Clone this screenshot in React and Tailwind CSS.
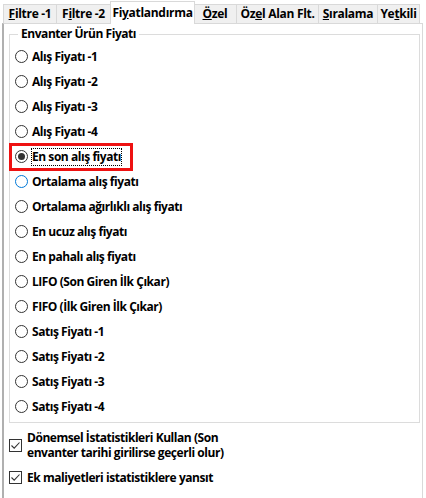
import React from "react";

const font = { fontFamily: '"Open Sans", "Noto Sans", sans-serif' };

function Tab({ children, selected, w }) {
  if (selected) {
    return (
      <div className={"h-[23px] -mb-px relative z-10 bg-white border border-[#d9d9d9] border-b-0 flex items-center justify-center shrink-0 whitespace-nowrap text-[12px] font-bold tracking-[-0.3px] text-black -mx-px " + w}>
        {children}
      </div>
    );
  }
  return (
    <div className={"h-[19px] bg-[#f0f0f0] border border-[#d9d9d9] border-b-0 -ml-px first:ml-0 flex items-center justify-center shrink-0 whitespace-nowrap text-[12px] font-bold tracking-[-0.3px] text-black " + w}>
      {children}
    </div>
  );
}

function Radio({ label, checked, hover, focus, highlight }) {
  const circle = (
    <span
      className={
        "w-[13px] h-[13px] rounded-full bg-white border flex items-center justify-center shrink-0 " +
        (hover ? "border-[#0078d7]" : "border-[#333333]")
      }
    >
      {checked && <span className="w-[7px] h-[7px] rounded-full bg-[#333333]" />}
    </span>
  );
  const text = (
    <span
      className={
        "text-[12px] font-bold tracking-[-0.45px] whitespace-nowrap text-black leading-[16px] " +
        (focus ? "outline outline-1 outline-dotted outline-black" : "")
      }
    >
      {label}
    </span>
  );
  if (highlight) {
    return (
      <div className="h-[25px] flex items-center">
        <div className="-ml-[6px] h-[28px] w-[124px] border-[3px] border-[#ee1111] flex items-center pl-[3px] gap-[4px]">
          {circle}
          {text}
        </div>
      </div>
    );
  }
  return (
    <div className="h-[25px] flex items-center gap-[4px]">
      {circle}
      {text}
    </div>
  );
}

function Check({ children }) {
  return (
    <div className="flex items-center gap-[5px]">
      <span className="w-[13px] h-[13px] border border-[#333333] bg-white shrink-0 flex items-center justify-center">
        <svg width="11" height="11" viewBox="0 0 11 11">
          <path d="M1.5 5.5 L4.2 8.2 L9.5 2.5" fill="none" stroke="#333333" strokeWidth="1.1" />
        </svg>
      </span>
      <span className="text-[12px] font-bold tracking-[-0.45px] text-black leading-[15px] whitespace-nowrap">{children}</span>
    </div>
  );
}

export default function App() {
  const items = [
    { label: "Alış Fiyatı -1" },
    { label: "Alış Fiyatı -2" },
    { label: "Alış Fiyatı -3" },
    { label: "Alış Fiyatı -4" },
    { label: "En son alış fiyatı", checked: true, focus: true, highlight: true },
    { label: "Ortalama alış fiyatı", hover: true },
    { label: "Ortalama ağırlıklı alış fiyatı" },
    { label: "En ucuz alış fiyatı" },
    { label: "En pahalı alış fiyatı" },
    { label: "LIFO (Son Giren İlk Çıkar)" },
    { label: "FIFO (İlk Giren İlk Çıkar)" },
    { label: "Satış Fiyatı -1" },
    { label: "Satış Fiyatı -2" },
    { label: "Satış Fiyatı -3" },
    { label: "Satış Fiyatı -4" },
  ];
  return (
    <div className="w-[426px] h-[498px] bg-white overflow-hidden flex flex-col" style={font}>
      <div className="flex items-end pl-[3px] h-[23px] shrink-0">
        <Tab w="w-[54px]"><span><u>F</u>iltre -1</span></Tab>
        <Tab w="w-[55px]"><span>F<u>i</u>ltre -2</span></Tab>
        <Tab selected w="w-[85px]"><span>Fi<u>y</u>atlandırma</span></Tab>
        <Tab w="w-[44px]"><span><u>Ö</u>zel</span></Tab>
        <Tab w="w-[83px]"><span>Öz<u>e</u>l Alan Flt.</span></Tab>
        <Tab w="w-[60px]"><span><u>S</u>ıralama</span></Tab>
        <Tab w="w-[43px]"><span>Ye<u>t</u>kili</span></Tab>
      </div>
      <div className="flex-1 ml-[2px] mr-[3px] border-l-2 border-r border-t border-l-[#b0b0b0] border-r-[#d9d9d9] border-t-[#d9d9d9] pt-[3px] pl-[5px] pr-[2px] flex flex-col">
        <fieldset className="border border-[#dcdcdc] pl-[5px] pb-[3px]">
          <legend className="ml-[3px] px-[3px] text-[12px] font-bold tracking-[-0.45px] text-black leading-[14px]">
            Envanter Ürün Fiyatı
          </legend>
          <div className="flex flex-col pt-[3px]">
            {items.map((it) => (
              <Radio key={it.label} {...it} />
            ))}
          </div>
        </fieldset>
        <div className="mt-[7px] flex flex-col gap-[10px]">
          <Check>
            Dönemsel İstatistikleri Kullan (Son
            <br />
            envanter tarihi girilirse geçerli olur)
          </Check>
          <Check>Ek maliyetleri istatistiklere yansıt</Check>
        </div>
      </div>
    </div>
  );
}
